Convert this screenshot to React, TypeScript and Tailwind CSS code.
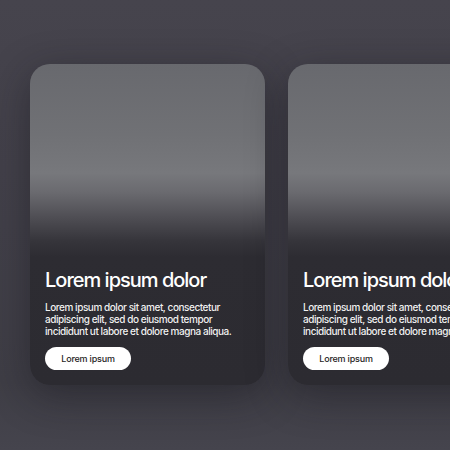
const cards = [0, 1];

function Card() {
  return (
    <div className="w-[235px] h-[321px] shrink-0 rounded-[20px] overflow-hidden flex flex-col justify-end px-[15px] pb-[15px] shadow-[0_10px_40px_rgba(20,20,26,0.45)] bg-[linear-gradient(180deg,#68696e_0%,#707175_22%,#77787c_34%,#6a6a6f_40%,#4e4d53_48%,#36353b_55%,#2d2c32_60%,#2c2b31_100%)]">
      <h2 className="text-[20px] leading-[24px] font-medium tracking-[-1px] text-white whitespace-nowrap">
        Lorem ipsum dolor
      </h2>
      <p className="mt-[9px] text-[10px] leading-[12px] font-medium tracking-[-0.45px] text-white/95">
        Lorem ipsum dolor sit amet, consectetur adipiscing elit, sed do eiusmod tempor incididunt ut labore et dolore magna aliqua.
      </p>
      <button className="mt-[10px] w-[86px] h-[23px] rounded-full bg-white text-[9px] font-medium text-[#1f1e24] tracking-[-0.2px]">
        Lorem ipsum
      </button>
    </div>
  );
}

export default function App() {
  return (
    <div
      className="w-[450px] h-[450px] overflow-hidden bg-[linear-gradient(180deg,#46444d_0%,#424049_50%,#3f3e46_85%,#45444d_100%)] flex gap-[23px] pl-[30px] pt-[64px]"
      style={{ fontFamily: 'Inter, "Noto Sans", sans-serif' }}
    >
      {cards.map((c) => (
        <Card key={c} />
      ))}
    </div>
  );
}
